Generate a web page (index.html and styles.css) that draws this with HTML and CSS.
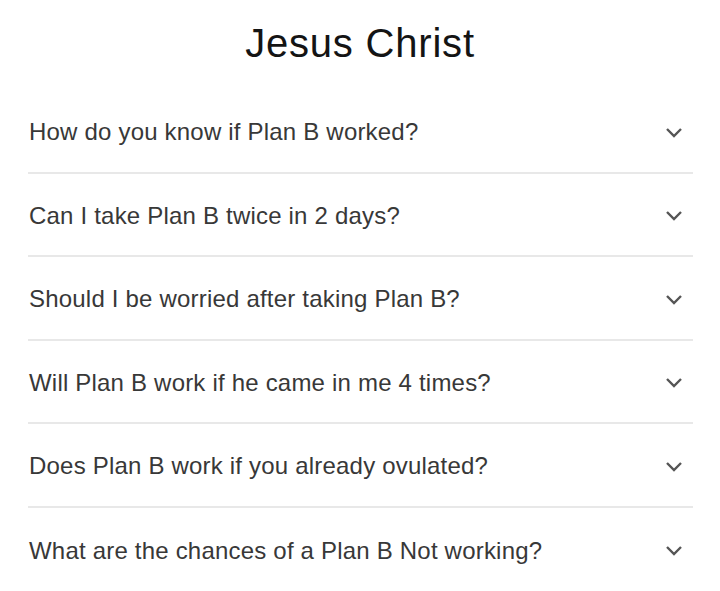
FILE: index.html
```html
<!DOCTYPE html>
<html lang="en">
<head>
    <meta charset="UTF-8">
    <meta name="viewport" content="width=device-width, initial-scale=1.0">
    <title>Jesus Christ</title>
    <link rel="stylesheet" href="styles.css">
</head>

<body>
    <!-- Title -->
    <h1 class="title">Jesus Christ</h1>

    <!-- People also ask -->
    <div class="questions">
        <div class="question">
            <span>How do you know if Plan B worked?</span>
            <svg class="chevron" viewBox="0 0 18 11"><path d="M2 2 L9 9 L16 2"/></svg>
        </div>
        <div class="question">
            <span>Can I take Plan B twice in 2 days?</span>
            <svg class="chevron" viewBox="0 0 18 11"><path d="M2 2 L9 9 L16 2"/></svg>
        </div>
        <div class="question">
            <span>Should I be worried after taking Plan B?</span>
            <svg class="chevron" viewBox="0 0 18 11"><path d="M2 2 L9 9 L16 2"/></svg>
        </div>
        <div class="question">
            <span>Will Plan B work if he came in me 4 times?</span>
            <svg class="chevron" viewBox="0 0 18 11"><path d="M2 2 L9 9 L16 2"/></svg>
        </div>
        <div class="question">
            <span>Does Plan B work if you already ovulated?</span>
            <svg class="chevron" viewBox="0 0 18 11"><path d="M2 2 L9 9 L16 2"/></svg>
        </div>
        <div class="question">
            <span>What are the chances of a Plan B Not working?</span>
            <svg class="chevron" viewBox="0 0 18 11"><path d="M2 2 L9 9 L16 2"/></svg>
        </div>
    </div>
</body>
</html>
```

FILE: styles.css
```css
/* Reset */
* {
    margin: 0;
    padding: 0;
    box-sizing: border-box;
}

body {
    font-family: 'Liberation Sans', Arial, sans-serif;
    background-color: #ffffff;
    color: #333333;
    width: 720px;
    height: 591px;
    overflow: hidden;
}

/* Title */
.title {
    font-weight: 400;
    font-size: 40px;
    letter-spacing: 0.8px;
    color: #141414;
    text-align: center;
    padding-top: 21px;
    height: 90px;
}

/* List */
.questions {
    display: flex;
    flex-direction: column;
    margin: 0 27px 0 28px;
}

.question {
    display: flex;
    justify-content: space-between;
    align-items: center;
    height: 83.5px;
    font-size: 24px;
    letter-spacing: 0.2px;
    color: #383838;
    padding: 3px 10px 0 1px;
    border-bottom: 2px solid #e8e8e8;
}

.question:last-child {
    border-bottom: none;
}

.chevron {
    width: 18px;
    height: 11px;
    fill: none;
    stroke: #555555;
    stroke-width: 2.4;
}
```
